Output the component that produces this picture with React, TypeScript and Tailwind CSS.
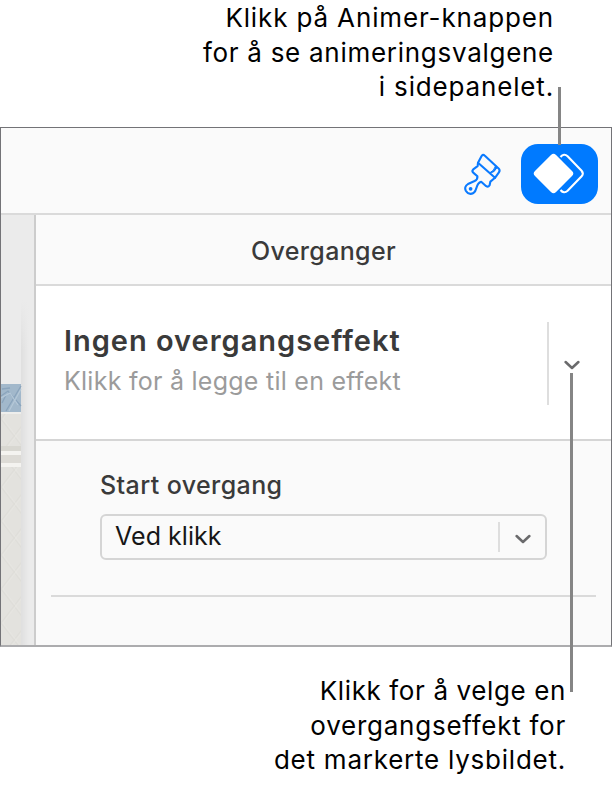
import React from "react";

const caption = "block whitespace-nowrap text-[26px] leading-[34.5px] text-black";

function Chevron() {
  return (
    <svg width="16" height="10" viewBox="0 0 16 10" fill="none" className="block shrink-0">
      <path d="M1.6 2 8 8 14.4 2" stroke="#6a6a6c" strokeWidth="2.5" strokeLinecap="round" strokeLinejoin="round" />
    </svg>
  );
}

function Brush() {
  return (
    <svg width="46" height="52" viewBox="0 0 46 52" fill="none" stroke="#0a7aff" strokeWidth="2.1" strokeLinejoin="round" strokeLinecap="round" className="block shrink-0">
      <path d="M24.6 7.6 L38.6 20.4 Q40.4 22.3 38.9 24.4 L35 29.8 L18 14.8 L21.6 8 Q23 6 24.6 7.6Z" />
      <path d="M18 15 L17.6 18.2 L13.2 21.4 Q11.6 23 13.2 24.6 L17.4 28.3 Q17.8 31.4 14.6 33 L8 36 Q3.8 38.8 5.8 42.8 Q8.8 47.4 13.5 45 Q15.6 43.4 16.4 40 Q17.8 34.8 21.2 33.8 L26.2 38.2 Q28.2 39.4 29.6 37.2 L30.4 33.6 L35 29.8" />
      <path d="M35.6 18 Q33.6 23.6 30 24.6 Q34 25.2 36.6 20.4Z" fill="#0a7aff" strokeWidth="1" />
      <circle cx="10.6" cy="40.8" r="1" fill="#0a7aff" strokeWidth="1.8" />
    </svg>
  );
}

function Animate() {
  return (
    <svg width="77" height="60" viewBox="0 0 77 60" className="block">
      <path d="M39.5 13 Q43 8.8 46.6 12.2 L60.6 26.7 Q63 29.5 60.6 32.3 L46.6 46.8 Q43 50.2 39.5 46" fill="none" stroke="#fff" strokeWidth="2.1" />
      <rect x="17.6" y="14.6" width="29.8" height="29.8" rx="3.6" transform="rotate(45 32.5 29.5)" fill="#fff" />
    </svg>
  );
}

function SlideEdge() {
  return (
    <svg width="33" height="431" viewBox="0 0 33 431" className="block">
      <defs>
        <linearGradient id="shade"><stop stopColor="#dfdfdf" /><stop offset="1" stopColor="#ebebeb" /></linearGradient>
        <linearGradient id="fade" x2="0" y2="1"><stop stopColor="#ebebeb" /><stop offset="1" stopColor="#ebebeb" stopOpacity="0" /></linearGradient>
        <pattern id="quilt" width="26" height="34" patternUnits="userSpaceOnUse">
          <path d="M0 0 26 34M26 0 0 34" stroke="#d8d7d2" strokeWidth="1.2" />
          <path d="M2 0 28 34M28 0 2 34" stroke="#ebeae6" strokeWidth="1" />
        </pattern>
      </defs>
      <rect width="33" height="431" fill="#ebebeb" />
      <rect x="20" y="85" width="8" height="346" fill="url(#shade)" />
      <rect x="20" y="85" width="13" height="50" fill="url(#fade)" />
      <rect y="169" width="20" height="28" fill="#a2b8cb" />
      <path d="M0 181 7 176 20 191M5 196 20 171M1 174 9 173M1 188 5 180" stroke="#8aa4bc" strokeWidth="1.3" fill="none" />
      <path d="M0 183 9 178 17 190M8 196 20 174" stroke="#b5c8d8" strokeWidth="1.2" fill="none" />
      <rect y="197" width="20" height="234" fill="#e3e2de" />
      <rect y="197" width="20" height="234" fill="url(#quilt)" opacity=".4" />
      <rect y="197" width="20" height="2" fill="#eeeeec" />
      <rect y="231" width="20" height="5" fill="#d8d7d1" />
      <rect y="236" width="20" height="4" fill="#f4f3f0" />
      <rect y="240" width="20" height="8" fill="#dddbd6" />
      <rect y="248" width="20" height="4" fill="#f4f3f0" />
    </svg>
  );
}

export default function App() {
  return (
    <div className="relative flex h-[787px] w-[612px] flex-col overflow-hidden bg-white font-['Inter',sans-serif]">
      <div className="flex h-[127px] flex-col items-end pt-px pr-[58px] text-right">
        <span className={`${caption} tracking-[0.86px]`}>Klikk på Animer-knappen</span>
        <span className={`${caption} tracking-[0.72px]`}>for å se animeringsvalgene</span>
        <span className={`${caption} tracking-[0.84px]`}>i sidepanelet.</span>
      </div>

      <div className="flex h-[520px] flex-col border border-[#737377] border-b-[#acacae] border-b-2 bg-[#fafafa]">
        <div className="flex h-[87px] items-start justify-end border-b-2 border-[#dadada] pr-[13px]">
          <div className="mt-[20px] mr-[15px]"><Brush /></div>
          <button className="mt-[16px] h-[60px] w-[77px] rounded-[17px] bg-[#007aff]"><Animate /></button>
        </div>
        <div className="flex min-h-0 flex-1">
          <div className="w-[33px] shrink-0 overflow-hidden"><SlideEdge /></div>
          <div className="flex flex-1 flex-col border-l-2 border-[#cccccc]">
            <div className="flex h-[71px] items-center justify-center border-b-2 border-[#dadada] pt-[4px] text-[25px] font-[540] text-[#3a3a3a]">
              <span className="tracking-[0.35px] whitespace-nowrap">Overganger</span>
            </div>
            <div className="flex h-[155px] items-start border-b-2 border-[#d5d5d5] bg-white pl-[28px]">
              <div className="flex-1 pt-[37px]">
                <div className="text-[29px] leading-[36px] font-semibold tracking-[0.98px] whitespace-nowrap text-[#3a3a3a]">Ingen overgangseffekt</div>
                <div className="mt-[6px] text-[25px] leading-[32px] tracking-[0.26px] whitespace-nowrap text-[#9b9b9b]">Klikk for å legge til en effekt</div>
              </div>
              <div className="mt-[36px] h-[83px] w-[2px] bg-[#dedede]" />
              <div className="mt-[74px] mr-[31px] ml-[15px]"><Chevron /></div>
            </div>
            <div className="pt-[28px] pr-[15px] pl-[15px]">
              <div className="ml-[49px] text-[25px] leading-[32px] font-[540] tracking-[0.4px] whitespace-nowrap text-[#3a3a3a]">Start overgang</div>
              <div className="mt-[13px] ml-[49px] flex h-[46px] w-[447px] items-center rounded-[6px] border-2 border-[#d5d5d5] pr-[14px] pl-[13px]">
                <span className="flex-1 pb-[2px] text-[25px] leading-[32px] tracking-[0.05px] whitespace-nowrap text-[#161616]">Ved klikk</span>
                <span className="h-[30px] w-[2px] bg-[#dedede]" />
                <span className="mt-[3px] ml-[15px]"><Chevron /></span>
              </div>
              <div className="mt-[35px] h-[2px] w-[545px] bg-[#dadada]" />
            </div>
          </div>
        </div>
      </div>

      <div className="flex flex-col items-end pt-[27px] pr-[46px] text-right">
        <span className={`${caption} tracking-[0.62px]`}>Klikk for å velge en</span>
        <span className={`${caption} tracking-[0.75px]`}>overgangseffekt for</span>
        <span className={`${caption} tracking-[0.76px]`}>det markerte lysbildet.</span>
      </div>

      <div className="absolute top-[87px] left-[558px] h-[58px] w-[3px] bg-[#858585]" />
      <div className="absolute top-[373px] left-[570px] h-[319px] w-[3px] bg-[#858585]" />
    </div>
  );
}
